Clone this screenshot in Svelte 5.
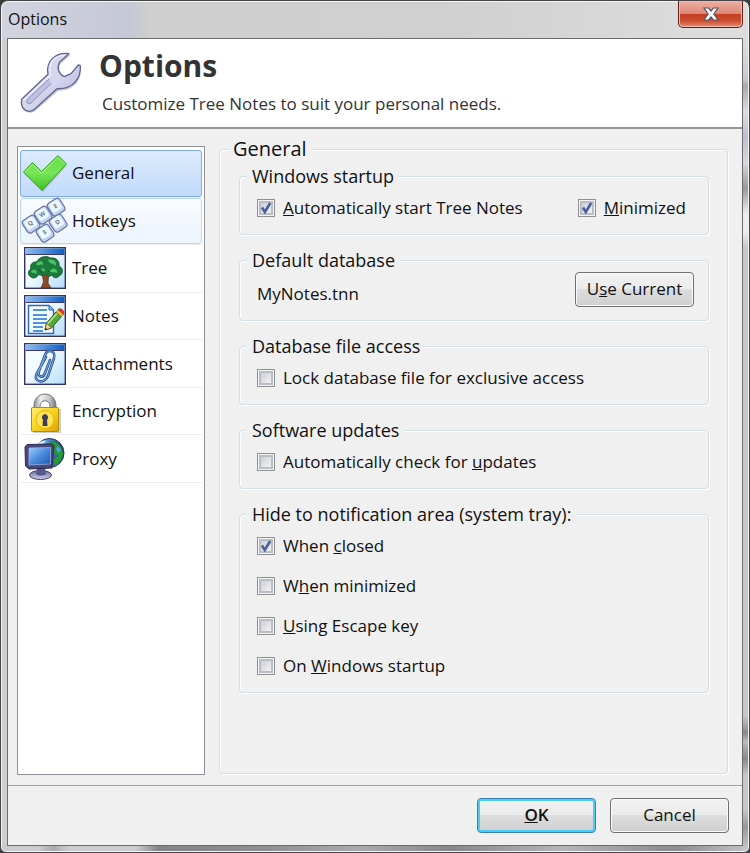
<script>
  let selected = $state("general");

  const sections = [
    { id: "general", label: "General" },
    { id: "hotkeys", label: "Hotkeys", hot: true },
    { id: "tree", label: "Tree" },
    { id: "notes", label: "Notes" },
    { id: "attachments", label: "Attachments" },
    { id: "encryption", label: "Encryption" },
    { id: "proxy", label: "Proxy" }
  ];

  const keys = [
    { x: 33, y: 8, letter: "E" },
    { x: 20, y: 16, letter: "W" },
    { x: 8, y: 25, letter: "Q" },
    { x: 35, y: 24, letter: "D" },
    { x: 22, y: 34, letter: "S" }
  ];

  let options = $state({
    autoStart: true,
    minimized: true,
    lock: false,
    updates: false,
    closed: true,
    whenMinimized: false,
    escape: false,
    startup: false
  });
</script>

<!-- pre / key / post split a label round its access key -->
{#snippet check(name, pre, key, post)}
  <label class="check">
    <span class="check__box">
      <input type="checkbox" bind:checked={options[name]} />
      <svg viewBox="0 0 18 18" aria-hidden="true">
        <path d="M5 8.5L7.8 13L13.2 4" />
      </svg>
    </span>
    <span>{pre}<u>{key}</u>{post}</span>
  </label>
{/snippet}

{#snippet frame()}
  <rect x="1.7" y="1.7" width="40.6" height="40.6" fill="url(#pane)" stroke="#33336b" stroke-width="1.4" />
  <rect x="2.5" y="2.5" width="39" height="5.5" fill="url(#bar)" />
  <path d="M2.5 8.5H41.5" stroke="#39396f" />
{/snippet}

{#snippet icon(id)}
  <svg class="nav__icon" viewBox="0 0 44 44" aria-hidden="true">
    {#if id === "general"}
      <path d="M1 23L10 14L19 23L35 6L43.5 15L20 41Z" fill="#557" opacity=".25" />
      <path d="M.5 21L9.500 11.500L18.500 20.500L35 4.500L43.500 13L19 39.500Z" fill="url(#green)" stroke="#37a41d" />
      <path d="M2.500 21L9.500 13.500L18.500 22.500L35 6.500L41.500 13" fill="none" stroke="#a6f48a" stroke-width="1" />
    {:else if id === "hotkeys"}
      {#each keys as k}
        <g transform="translate({k.x} {k.y}) rotate(-33)">
          <rect x="-7.2" y="-7.2" width="14.4" height="14.8" rx="3.5" fill="#c3d3ec" stroke="#6674a6" stroke-width="1.2" />
          <rect x="-5.4" y="-6.2" width="10.8" height="10.4" rx="2.5" fill="#ecf8ff" />
          <text x="0" y="1" text-anchor="middle" font-size="6" font-weight="700" fill="#6d7590">{k.letter}</text>
        </g>
      {/each}
    {:else if id === "tree"}
      {@render frame()}
      <path d="M18 42L20.500 36L19.500 30L13 25L21 28L22 22L24 28L32 24L25.500 31L25 37L28 42Z" fill="#8b4a28" stroke="#5b2d16" stroke-width=".7" />
      <path d="M8 31C4 29 5 24 8 23C6 18 11 15 14 16C15 11 24 9 27 12C34 11 37 16 36 20C41 22 40 29 36 30C34 33 30 32 29 29C25 32 23 29 22 28C19 31 16 28 15 29C14 32 10 33 8 31Z" fill="#1c7a3c" stroke="#0f5427" stroke-width=".8" />
      <path d="M13 18C17 13 21 16 20 19C17 17 15 21 13 18ZM25 14C31 12 35 17 32 20C30 16 27 19 25 14ZM8 25C12 22 15 25 13 28C11 26 9 28 8 25ZM26 24C30 21 35 23 34 27C31 25 28 28 26 24ZM18 23C21 21 23 24 21 26Z" fill="#4cc267" />
      <path d="M15 23L19 27M29 22L25 26" stroke="#0d4a25" stroke-width="1" />
    {:else if id === "notes"}
      {@render frame()}
      <path d="M5.500 11.500H26L30.500 16V39.500H5.500Z" fill="#f5fbff" stroke="#2469c7" stroke-width="1.400" />
      <path d="M26 11.500V16H30.500" fill="#77b8ee" stroke="#2469c7" />
      <path d="M10 16H24M10 21H24M10 25H24M10 29H24M10 33H20M10 37H20" stroke="#1871ce" stroke-width="1.500" />
      <path d="M22 36L23.500 29L33 18L38.500 22.500L28.500 34Z" fill="#54a83e" stroke="#285d27" />
      <path d="M24.500 30L34 19.500" stroke="#b8e27e" stroke-width="1.800" />
      <path d="M22 36L23.500 29L28.500 34Z" fill="#f8d28c" stroke="#7d5129" stroke-width=".8" />
      <path d="M33 18L35 15.500L40.500 20.500L38.500 22.500Z" fill="#f4c12c" stroke="#a3731c" stroke-width=".7" />
      <path d="M35 15.500C38 13 42 17 40.500 20.500Z" fill="#e23b2c" stroke="#99291d" stroke-width=".7" />
      <path d="M22 36L22.500 33.500L24.500 35.500Z" fill="#222" />
    {:else if id === "attachments"}
      {@render frame()}
      <g fill="none" stroke-linecap="round">
        <path d="M23 15L14 31C9 41 22 42 25 34L31 16C33 9 25 6 22 13L16 29C14 35 20 37 22 31L27 18" stroke="#28559d" stroke-width="2.600" />
        <path d="M23 15L14 31C9 41 22 42 25 34L31 16C33 9 25 6 22 13L16 29C14 35 20 37 22 31L27 18" stroke="#79a8df" stroke-width="1" />
      </g>
    {:else if id === "encryption"}
      <path d="M11 20V17C11 1 33 1 33 17V20H27V17C27 10 17 10 17 17V20Z" fill="url(#steel)" stroke="#777" />
      <rect x="10" y="20" width="28" height="24" fill="#555" opacity=".3" />
      <rect x="8.500" y="18.500" width="27" height="24" rx="1" fill="url(#gold)" stroke="#b68b00" />
      <circle cx="22" cy="30.500" r="9" fill="#ffe34f" stroke="#e8b411" />
      <path d="M22 25A3.500 3.500 0 0 1 24 31L24.500 37H19.500L20 31A3.500 3.500 0 0 1 22 25Z" fill="#3d3d59" />
    {:else}
      <circle cx="26.500" cy="16" r="14.500" fill="url(#globe)" stroke="#27386b" />
      <path d="M27 4C34 4 40 10 40 17C39 24 35 27 32 29L31 23L35 19L30 15L26 11Z" fill="#249a34" />
      <path d="M13 8C16 5 20 3 23 4L20 7Z" fill="#d5e9f7" />
      <path d="M35 9L38 13L35 16L33 12Z" fill="#5d9bea" />
      <ellipse cx="17.500" cy="38" rx="11" ry="4.500" fill="url(#metal)" stroke="#43436e" />
      <path d="M14 31H22L23 37C20 39 16 39 13 37Z" fill="#55588c" />
      <path d="M2 10L4 7.500L29 7L31 9L29 31L6 32L2.500 29Z" fill="#47487a" stroke="#272951" />
      <path d="M6 11L27.500 10.500V27L6 28Z" fill="url(#screen)" stroke="#a6b8e6" stroke-width=".7" />
    {/if}
  </svg>
{/snippet}

<!-- shared gradients -->
<svg class="defs" aria-hidden="true">
  <defs>
    <linearGradient id="green" x2="0" y2="1"><stop stop-color="#62dd43" /><stop offset=".5" stop-color="#77e65a" /><stop offset="1" stop-color="#3fc01f" /></linearGradient>
    <linearGradient id="pane" x2="1" y2="1"><stop stop-color="#fff" /><stop offset=".45" stop-color="#f1faff" /><stop offset="1" stop-color="#b4dcfa" /></linearGradient>
    <linearGradient id="bar"><stop stop-color="#8dbdf0" /><stop offset="1" stop-color="#0c5fc6" /></linearGradient>
    <linearGradient id="steel"><stop stop-color="#8c8c8c" /><stop offset=".3" stop-color="#f0f0f0" /><stop offset=".7" stop-color="#c5c5c5" /><stop offset="1" stop-color="#777" /></linearGradient>
    <linearGradient id="gold" x2="1" y2="1"><stop stop-color="#fff06b" /><stop offset=".5" stop-color="#f9d21f" /><stop offset="1" stop-color="#d9a50a" /></linearGradient>
    <linearGradient id="globe"><stop stop-color="#b8d9ef" /><stop offset=".5" stop-color="#4d83c8" /><stop offset="1" stop-color="#17366f" /></linearGradient>
    <linearGradient id="screen" x2="1" y2="1"><stop stop-color="#9fcdf8" /><stop offset=".5" stop-color="#4a8bdc" /><stop offset="1" stop-color="#1e57ae" /></linearGradient>
    <linearGradient id="metal" x2="0" y2="1"><stop stop-color="#6a6a9a" /><stop offset="1" stop-color="#d0d0ec" /></linearGradient>
    <linearGradient id="wrench" x2="1" y2="1"><stop stop-color="#cfd0ea" /><stop offset=".5" stop-color="#d6d7ef" /><stop offset="1" stop-color="#aeb0d6" /></linearGradient>
  </defs>
</svg>

<div class="window">
  <div class="titlebar">
    <span class="titlebar__text">Options</span>
    <button class="close" aria-label="Close">
      <svg viewBox="0 0 18 14" aria-hidden="true">
        <path d="M2 1H6.500L9 4L11.500 1H16L11.800 7L16 13H11.500L9 10L6.500 13H2L6.200 7Z" />
      </svg>
    </button>
  </div>

  <div class="client">
    <header class="header">
      <svg class="header__icon" viewBox="12 33 192 192" aria-hidden="true">
        <path d="M166 46L134 74C126 92 136 108 150 112L172 102L196 80C204 118 178 152 130 152L64 210C46 228 14 216 18 184L100 106C92 66 124 38 166 46Z" fill="#444" opacity=".3" />
        <path d="M162 41L134 66C124 84 132 103 148 110L168 101L190 75L196 77C199 114 174 149 126 146L62 205C44 224 14 210 20 178L99 103C91 64 122 35 162 41Z" fill="url(#wrench)" stroke="#62658f" stroke-width="4" stroke-linejoin="round" />
        <path d="M149 46C116 47 98 72 107 104L27 179" fill="none" stroke="#eeeeff" stroke-width="4" />
        <path d="M102 117L38 177C32 188 39 195 48 189L109 130" fill="#c0c1e0" stroke="#8f91bb" stroke-width="3" />
      </svg>
      <div>
        <h1>Options</h1>
        <p>Customize Tree Notes to suit your personal needs.</p>
      </div>
    </header>

    <main class="body">
      <nav class="nav" aria-label="Sections">
        <ul>
          {#each sections as s}
            <li>
              <button
                class="nav__item"
                class:hot={s.hot}
                class:active={selected === s.id}
                onclick={() => (selected = s.id)}
              >
                {@render icon(s.id)}
                <span>{s.label}</span>
              </button>
            </li>
          {/each}
        </ul>
      </nav>

      <fieldset class="page">
        <legend>General</legend>
        <div class="groups">
          <fieldset class="group">
            <legend>Windows startup</legend>
            <div class="row">
              {@render check("autoStart", "", "A", "utomatically start Tree Notes")}
              {@render check("minimized", "", "M", "inimized")}
            </div>
          </fieldset>

          <fieldset class="group group--database">
            <legend>Default database</legend>
            <div class="row">
              <span class="file">MyNotes.tnn</span>
              <button class="button">U<u>s</u>e Current</button>
            </div>
          </fieldset>

          <fieldset class="group">
            <legend>Database file access</legend>
            {@render check("lock", "Lock database file for exclusive access", "", "")}
          </fieldset>

          <fieldset class="group">
            <legend>Software updates</legend>
            {@render check("updates", "Automatically check for ", "u", "pdates")}
          </fieldset>

          <fieldset class="group">
            <legend>Hide to notification area (system tray):</legend>
            <div class="stack">
              {@render check("closed", "When ", "c", "losed")}
              {@render check("whenMinimized", "W", "h", "en minimized")}
              {@render check("escape", "", "U", "sing Escape key")}
              {@render check("startup", "On ", "W", "indows startup")}
            </div>
          </fieldset>
        </div>
      </fieldset>
    </main>

    <footer class="footer">
      <button class="button button--default"><u>O</u>K</button>
      <button class="button">Cancel</button>
    </footer>
  </div>
</div>

<style>
  :global(body) {
    background: #3c3c40;
  }

  .defs {
    position: absolute;
    width: 0;
    height: 0;
  }

  .window {
    box-sizing: border-box;
    min-height: 100vh;
    display: flex;
    flex-direction: column;
    padding: 0 6px 6px;
    border: 1px solid #45454a;
    border-radius: 8px 8px 6px 6px;
    box-shadow: inset 0 0 0 1px #f4f4f4;
    background:
      linear-gradient(#dcdcdc 5%, #c9cbd2 9%, #aaa 10%, #dcdce4 13%, #bfc0cc 16%, #d8d8de 19%, #999 22%, #eee 25%, #eee 27%, #c8c8c8 29%, #c8c8c8 84%, #888 86%, #bbb 87%, #888 89%, #c8c8c8 91%, #c8c8c8 95%, #999 97%, #ccc) right / 7px 100% no-repeat,
      linear-gradient(90deg, #ccc 5%, #aaa 7%, #ccc 9%, #ccc 18%, #858585 21%, #8f8f8f 35%, #aaa 48%, #888 60%, #b5b5b5 75%, #8c8c8c 90%, #c4c4c4) bottom / 100% 8px no-repeat,
      linear-gradient(90deg, #d2d4df, #c5c8d6 17%, #cfcfcf 20%, #d0d0d0 60%, #dedede) top / 100% 38px no-repeat,
      #cfcfd2;
    color: #111;
    font-family: "Trebuchet MS", "Open Sans", "Noto Sans", sans-serif;
    font-size: 17px;
    line-height: 20px;
  }

  button {
    font: inherit;
    color: inherit;
  }

  .titlebar {
    display: flex;
    justify-content: space-between;
    align-items: flex-start;
    height: 37px;
  }

  .titlebar__text {
    padding: 8px 1px;
    font-family: "Segoe UI", "Open Sans", sans-serif;
    font-size: 16px;
  }

  .close {
    display: flex;
    align-items: center;
    justify-content: center;
    width: 65px;
    height: 27px;
    padding: 0;
    border: 1px solid #5a2320;
    border-top: 0;
    border-radius: 0 0 5px 5px;
    background: linear-gradient(#eeb0a5, #dd8878 48%, #c13d23 50%, #cb4b2e 75%, #e58e6f);
    box-shadow: inset 0 0 0 1px #f0b9ae;
  }

  .close svg {
    width: 18px;
    height: 14px;
    fill: #fff;
    stroke: #555968;
    stroke-width: 1.2;
  }

  .client {
    flex: 1;
    display: flex;
    flex-direction: column;
    border: 1px solid #6c6c6e;
    background: #f0f0f0;
  }

  .header {
    display: flex;
    gap: 16px;
    padding: 12px 11px;
    border-bottom: 2px solid #959595;
    background: #fff;
  }

  .header__icon {
    width: 64px;
    height: 64px;
    flex-shrink: 0;
  }

  h1 {
    margin: 0;
    font-size: 30px;
    line-height: 30px;
    color: #333;
  }

  .header p {
    margin: 13px 0 0 3px;
    color: #333;
  }

  .body {
    flex: 1;
    display: flex;
    gap: 14px;
    padding: 8px 14px 10px 9px;
  }

  .nav {
    flex: 0 0 188px;
    box-sizing: border-box;
    margin-top: 9px;
    padding: 3px 2px;
    border: 1px solid #8f9299;
    background: #fff;
  }

  .nav ul {
    display: grid;
    grid-template-rows: repeat(7, 1fr);
    height: 333px;
    margin: 0;
    padding: 0;
    list-style: none;
  }

  .nav li {
    display: flex;
    border-bottom: 1px solid #eee;
  }

  .nav__item {
    flex: 1;
    display: flex;
    align-items: center;
    gap: 5px;
    padding: 0 2px;
    border: 1px solid transparent;
    border-radius: 3px;
    background: none;
    text-align: left;
  }

  .nav__item.hot {
    border-color: #b8d6fb;
    background: linear-gradient(#fafcfe, #ecf4fe);
  }

  .nav__item.active {
    border-color: #84acdd;
    background: linear-gradient(#dcebfd, #c1dbfc);
  }

  .nav__icon {
    width: 44px;
    height: 44px;
    flex-shrink: 0;
    overflow: visible;
  }

  fieldset {
    min-width: 0;
    margin: 0;
    border: 1px solid #d3dfe6;
    border-radius: 4px;
    box-shadow: inset 1px 1px 0 #fff, 1px 1px 0 #fff;
  }

  legend {
    padding: 0 5px;
    background: #f0f0f0;
  }

  .page {
    flex: 1;
    margin-bottom: 1px;
    padding: 3px 18px 20px 19px;
  }

  .page > legend {
    margin-left: -11px;
    font-size: 20px;
    line-height: 24px;
  }

  .groups {
    display: flex;
    flex-direction: column;
    gap: 13px;
  }

  .group {
    padding: 10px 14px 16px 17px;
  }

  .group > legend {
    margin-left: -10px;
    font-size: 18px;
    line-height: 24px;
  }

  .group--database {
    padding-top: 0;
    padding-bottom: 13px;
  }

  .row {
    display: flex;
    align-items: center;
    justify-content: space-between;
  }

  .row .check:last-child {
    margin-right: 8px;
  }

  .file {
    padding-top: 8px;
  }

  .stack {
    display: flex;
    flex-direction: column;
    gap: 20px;
  }

  .check {
    display: flex;
    align-items: center;
    gap: 8px;
  }

  .check__box {
    position: relative;
    width: 18px;
    height: 18px;
  }

  .check__box input {
    appearance: none;
    box-sizing: border-box;
    display: block;
    width: 18px;
    height: 18px;
    margin: 0;
    padding: 2px;
    border: 1px solid #8e8f8f;
    background:
      linear-gradient(135deg, #c8ccd3, #f6f6f6) content-box,
      #f4f4f4;
    box-shadow: inset 0 0 0 1px #f4f4f4, inset 0 0 0 3px #b9bdc4;
  }

  .check__box svg {
    position: absolute;
    inset: 0;
    fill: none;
    stroke: #4a5f9e;
    stroke-width: 2.6;
    pointer-events: none;
    visibility: hidden;
  }

  .check__box input:checked + svg {
    visibility: visible;
  }

  .button {
    width: 119px;
    height: 35px;
    padding: 0 0 2px;
    border: 1px solid #707070;
    border-radius: 4px;
    background: linear-gradient(#f2f2f2, #ebebeb 48%, #dddddd 50%, #cfcfcf);
    box-shadow: inset 0 0 0 1px #fafafa;
  }

  .button--default {
    border-color: #3c7fb1;
    box-shadow: inset 0 0 0 2px #48cdf5;
    font-weight: 600;
  }

  .footer {
    display: flex;
    justify-content: flex-end;
    gap: 14px;
    padding: 12px 13px 12px;
    border-top: 1px solid #a0a0a0;
  }
</style>
